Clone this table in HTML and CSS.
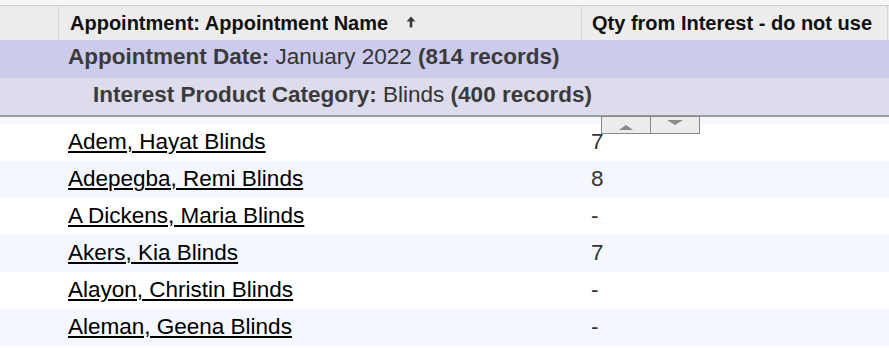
FILE: index.html
```html
<!DOCTYPE html>
<html>
<head>
<meta charset="utf-8">
<link rel="stylesheet" href="styles.css">
</head>
<body>
<div class="report">
  <div class="topstrip"></div>
  <div class="header">
    <div class="hcell hcell-blank"></div>
    <div class="hcell hcell-name">Appointment: Appointment Name
      <svg class="sort" width="10" height="12" viewBox="0 0 10 12"><path d="M5 0.5 L0.6 5.6 H3.7 V11.5 H6.3 V5.6 H9.4 Z" fill="#3a3a3a"/></svg>
    </div>
    <div class="hcell hcell-qty">Qty from Interest - do not use</div>
    <div class="hcell hcell-end"></div>
  </div>
  <div class="group group1"><b>Appointment Date:</b> January 2022 <b>(814 records)</b></div>
  <div class="group group2"><b>Interest Product Category:</b> Blinds <b>(400 records)</b></div>
  <div class="spacer"></div>
  <div class="rows">
    <div class="row"><div class="c1"></div><div class="c2"><a href="#">Adem, Hayat Blinds</a></div><div class="c3">7</div></div>
    <div class="row alt"><div class="c1"></div><div class="c2"><a href="#">Adepegba, Remi Blinds</a></div><div class="c3">8</div></div>
    <div class="row"><div class="c1"></div><div class="c2"><a href="#">A Dickens, Maria Blinds</a></div><div class="c3">-</div></div>
    <div class="row alt"><div class="c1"></div><div class="c2"><a href="#">Akers, Kia Blinds</a></div><div class="c3">7</div></div>
    <div class="row"><div class="c1"></div><div class="c2"><a href="#">Alayon, Christin Blinds</a></div><div class="c3">-</div></div>
    <div class="row alt"><div class="c1"></div><div class="c2"><a href="#">Aleman, Geena Blinds</a></div><div class="c3">-</div></div>
  </div>
  <div class="stepper">
    <div class="step"><span class="tri-up"></span></div>
    <div class="step"><span class="tri-down"></span></div>
  </div>
</div>
</body>
</html>
```
FILE: styles.css
```css
html, body {
  margin: 0;
  padding: 0;
  background: #ffffff;
  overflow: hidden;
}
.report {
  position: relative;
  width: 889px;
  height: 349px;
  overflow: hidden;
  font-family: "Liberation Sans", Arial, sans-serif;
  color: #222;
}
.topstrip {
  height: 5px;
  background: #f7f7f7;
  border-bottom: 1px solid #cfcfcf;
}
.header {
  display: grid;
  grid-template-columns: 59px 523px 306px 1px;
  height: 34px;
  background: #ececec;
}
.hcell {
  display: flex;
  align-items: center;
  font-size: 20px;
  font-weight: bold;
  color: #111;
  border-right: 1px solid #d6d6d6;
  white-space: nowrap;
}
.hcell-name { padding-left: 11px; }
.hcell-qty { padding-left: 10px; }
.hcell-end { border-right: none; }
.sort { margin-left: 18px; margin-top: -2px; }
.group {
  font-size: 22.5px;
  line-height: 33px;
  color: #333;
  white-space: nowrap;
  box-sizing: border-box;
}
.group b { color: #3a3a3a; }
.group1 {
  height: 38px;
  background: #cccbec;
  padding-left: 68px;
}
.group2 {
  height: 39px;
  background: #dddcec;
  padding-left: 93px;
  border-bottom: 2px solid #9a9a9a;
}
.spacer {
  height: 7px;
  background: #f4f7fd;
}
.row {
  display: grid;
  grid-template-columns: 59px 523px 307px;
  height: 37px;
  font-size: 22.5px;
  background: #ffffff;
}
.row.alt { background: #f4f7fd; }
.c2, .c3 {
  line-height: 36px;
  white-space: nowrap;
}
.c2 { padding-left: 9px; }
.c3 { padding-left: 9px; color: #333; }
.c2 a {
  color: #000;
  text-decoration: underline;
  text-decoration-thickness: 2px;
  text-underline-offset: 2px;
}
.stepper {
  position: absolute;
  left: 601px;
  top: 116px;
  display: flex;
  height: 18px;
  border: 1px solid #888;
  box-sizing: border-box;
  background: #ececec;
}
.step {
  width: 48px;
  display: flex;
  align-items: center;
  justify-content: center;
}
.step + .step { border-left: 1px solid #888; }
.tri-up {
  width: 0; height: 0;
  border-left: 7px solid transparent;
  border-right: 7px solid transparent;
  border-bottom: 5px solid #8a8a8a;
  margin-top: 4px;
}
.tri-down {
  width: 0; height: 0;
  border-left: 8px solid transparent;
  border-right: 8px solid transparent;
  border-top: 5px solid #8a8a8a;
  margin-top: -5px;
}
```
